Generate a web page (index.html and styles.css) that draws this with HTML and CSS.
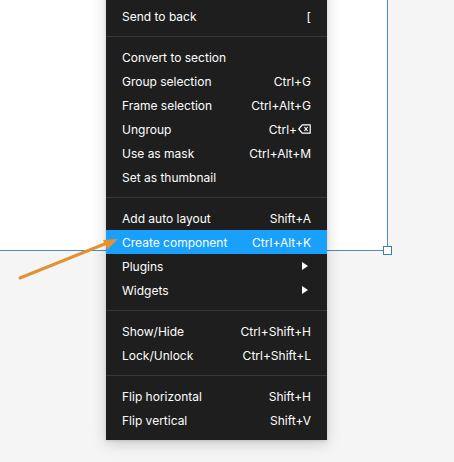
FILE: index.html
```html
<!DOCTYPE html>
<html lang="en">
<head>
<meta charset="utf-8">
<title>Context menu</title>
<link rel="stylesheet" href="styles.css">
</head>
<body>
<div class="canvas">
  <div class="frame">
    <span class="handle"></span>
  </div>

  <ul class="menu">
    <li class="item"><span class="label">Send backward</span><span class="key">Ctrl+[</span></li>
    <li class="item"><span class="label">Send to back</span><span class="key">[</span></li>
    <li class="sep"></li>
    <li class="item"><span class="label">Convert to section</span></li>
    <li class="item"><span class="label">Group selection</span><span class="key">Ctrl+G</span></li>
    <li class="item"><span class="label">Frame selection</span><span class="key">Ctrl+Alt+G</span></li>
    <li class="item"><span class="label">Ungroup</span><span class="key">Ctrl+<svg class="bksp" width="13" height="10" viewBox="0 0 13 10"><path d="M4.2 0.8H12.2V9.2H4.2L0.8 5Z" fill="none" stroke="currentColor" stroke-width="1.2" stroke-linejoin="round"/><path d="M6.4 3L9.6 7M9.6 3L6.4 7" stroke="currentColor" stroke-width="1.2"/></svg></span></li>
    <li class="item"><span class="label">Use as mask</span><span class="key">Ctrl+Alt+M</span></li>
    <li class="item"><span class="label">Set as thumbnail</span></li>
    <li class="sep"></li>
    <li class="item"><span class="label">Add auto layout</span><span class="key">Shift+A</span></li>
    <li class="item active"><span class="label">Create component</span><span class="key">Ctrl+Alt+K</span></li>
    <li class="item"><span class="label">Plugins</span><span class="sub"></span></li>
    <li class="item"><span class="label">Widgets</span><span class="sub"></span></li>
    <li class="sep"></li>
    <li class="item"><span class="label">Show/Hide</span><span class="key">Ctrl+Shift+H</span></li>
    <li class="item"><span class="label">Lock/Unlock</span><span class="key">Ctrl+Shift+L</span></li>
    <li class="sep"></li>
    <li class="item"><span class="label">Flip horizontal</span><span class="key">Shift+H</span></li>
    <li class="item"><span class="label">Flip vertical</span><span class="key">Shift+V</span></li>
  </ul>

  <svg class="pointer" width="130" height="60" viewBox="0 0 130 60">
    <line x1="20" y1="48" x2="107" y2="13" stroke="#e39232" stroke-width="3" stroke-linecap="round"/>
    <path d="M118 9L103 10L107.5 19.5Z" fill="#e39232"/>
  </svg>
</div>
</body>
</html>
```

FILE: styles.css
```css
html, body {
  margin: 0;
  padding: 0;
}

body {
  background: #f5f5f5;
  font-family: Inter, "Noto Sans", sans-serif;
  overflow: hidden;
}

.canvas {
  position: relative;
  width: 454px;
  height: 462px;
  background: #f5f5f5;
}

/* selected frame on the canvas; its left and top edges run off-screen */
.frame {
  position: relative;
  box-sizing: border-box;
  width: 388px;
  height: 251px;
  background: #ffffff;
  border-right: 1px solid #4b8db8;
  border-bottom: 1px solid #4b8db8;
}

.handle {
  position: absolute;
  right: -5px;
  bottom: -5px;
  box-sizing: border-box;
  width: 9px;
  height: 9px;
  background: #ffffff;
  border: 1px solid #3f7fa6;
}

/* right-click menu, scrolled so its first entry sits above the viewport */
.menu {
  position: absolute;
  left: 106px;
  top: -28px;
  width: 221px;
  margin: 0;
  padding: 8px 0;
  list-style: none;
  background: #1e1e1e;
  box-shadow: 0 4px 14px rgba(0, 0, 0, 0.16), 0 1px 3px rgba(0, 0, 0, 0.12);
  color: #ffffff;
  font-size: 12px;
}

.item {
  display: flex;
  align-items: center;
  justify-content: space-between;
  height: 24px;
  padding: 0 16px;
  white-space: nowrap;
}

.item.active {
  background: #18a0fb;
}

.key {
  display: flex;
  align-items: center;
}

.bksp {
  display: block;
  margin-left: 1px;
}

.sub {
  display: flex;
  justify-content: center;
  width: 12px;
}

.sub::before {
  content: "";
  width: 0;
  height: 0;
  border-top: 4px solid transparent;
  border-bottom: 4px solid transparent;
  border-left: 6px solid #ffffff;
}

.sep {
  height: 1px;
  margin: 8px 0;
  background: #383838;
}

/* annotation arrow pointing at the highlighted entry */
.pointer {
  position: absolute;
  left: 0;
  top: 230px;
}
```
